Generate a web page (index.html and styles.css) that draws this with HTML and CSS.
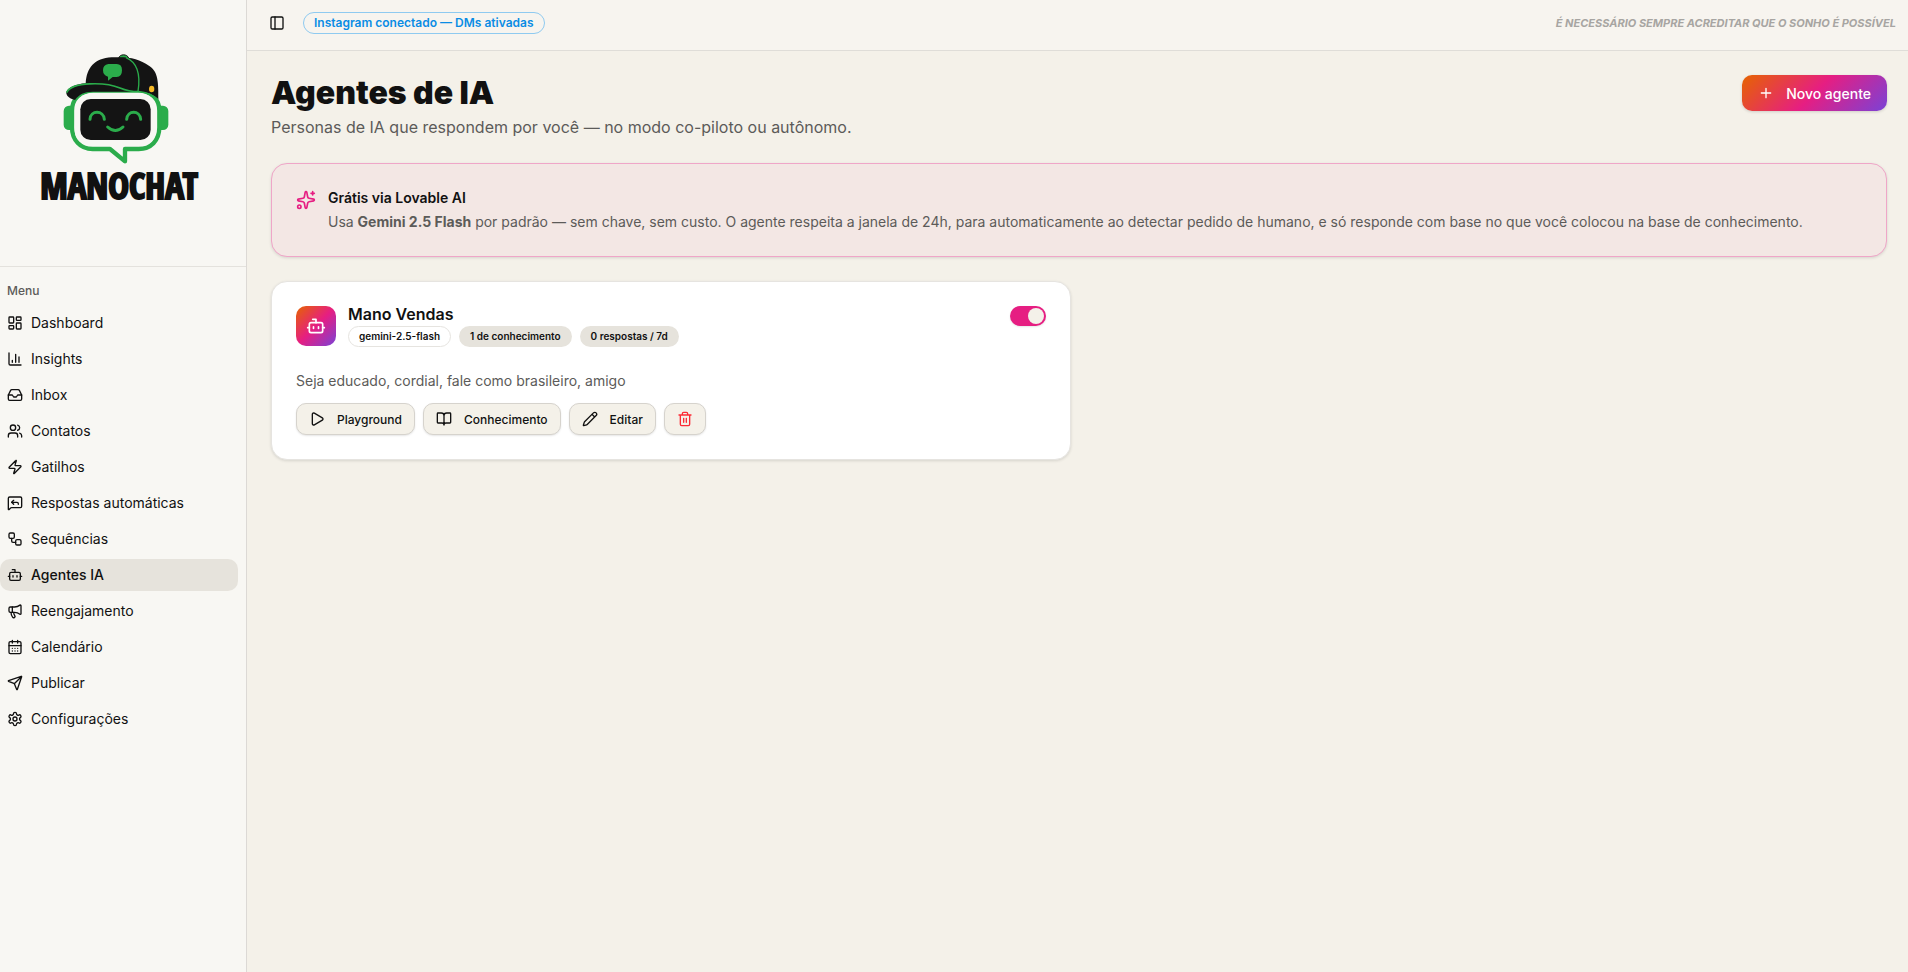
FILE: index.html
```html
<!DOCTYPE html>
<html lang="pt-BR">
<head>
    <meta charset="UTF-8">
    <meta name="viewport" content="width=device-width, initial-scale=1.0">
    <title>Agentes de IA</title>
    <link rel="stylesheet" href="styles.css">
</head>
<body>
    <div class="app">
        <aside class="sidebar">
            <a class="brand" href="#">
                <svg class="brand-logo" viewBox="129 36 336 342" aria-hidden="true">
                    <rect x="131" y="197" width="40" height="73" rx="16" fill="#2bac4b"/>
                    <rect x="406" y="197" width="39" height="73" rx="16" fill="#2bac4b"/>
                    <path d="M218 153H356C394 153 418 177 418 212V262C418 302 392 327 356 327H315V364L270 327H218C180 327 156 299 156 262V212C156 177 180 153 218 153Z" fill="#f8f7f3" stroke="#2bac4b" stroke-width="13" stroke-linejoin="round"/>
                    <path d="M296 55C298 41 323 41 326 55Z" fill="#2bac4b" stroke="#141414" stroke-width="3"/>
                    <path d="M197 130C200 83 223 55 275 52C332 50 356 56 388 78C411 94 416 115 415 178C402 163 380 154 354 155H218C192 155 177 163 165 180C145 175 138 165 139 157C144 141 170 132 197 130Z" fill="#141414"/>
                    <path d="M140 158C154 124 258 126 300 144C322 153 338 155 356 155" fill="none" stroke="#2bac4b" stroke-width="5"/>
                    <path d="M318 53C351 67 362 105 354 155M356 154Q390 157 413 178" fill="none" stroke="#2bac4b" stroke-width="4"/>
                    <path d="M265 72H290Q306 72 306 91Q306 111 290 111H278L264 122V110Q249 106 249 91Q249 74 265 72Z" fill="#2bac4b"/>
                    <ellipse cx="395" cy="147" rx="8" ry="10" fill="#f6b926"/>
                    <path d="M166 206C168 177 188 158 220 158H354C388 158 408 179 408 207V269C408 301 386 318 354 318H220C184 318 164 298 164 269Z" fill="#f8f7f3"/>
                    <rect x="181" y="177" width="211" height="123" rx="31" fill="#141414"/>
                    <path d="M210 238C211 210 251 210 253 238M320 238C322 210 360 210 362 238M263 261Q286 282 309 261" fill="none" stroke="#2bac4b" stroke-width="9" stroke-linecap="round"/>
                </svg>
                <span class="brand-name">MANOCHAT</span>
            </a>
            <nav class="menu" aria-label="Menu">
                <div class="menu-label">Menu</div>
                <a class="menu-item" href="#">
                    <svg class="icon" viewBox="0 0 24 24"><rect width="7" height="9" x="3" y="3" rx="1"/><rect width="7" height="5" x="14" y="3" rx="1"/><rect width="7" height="9" x="14" y="12" rx="1"/><rect width="7" height="5" x="3" y="16" rx="1"/></svg>
                    Dashboard
                </a>
                <a class="menu-item" href="#">
                    <svg class="icon" viewBox="0 0 24 24"><path d="M3 3v16a2 2 0 0 0 2 2h16M18 17V9M13 17V5M8 17v-3"/></svg>
                    Insights
                </a>
                <a class="menu-item" href="#">
                    <svg class="icon" viewBox="0 0 24 24"><path d="M22 12h-6l-2 3h-4l-2-3H2"/><path d="M5.45 5.11 2 12v6a2 2 0 0 0 2 2h16a2 2 0 0 0 2-2v-6l-3.45-6.89A2 2 0 0 0 16.76 4H7.24a2 2 0 0 0-1.79 1.11z"/></svg>
                    Inbox
                </a>
                <a class="menu-item" href="#">
                    <svg class="icon" viewBox="0 0 24 24"><path d="M16 21v-2a4 4 0 0 0-4-4H6a4 4 0 0 0-4 4v2"/><circle cx="9" cy="7" r="4"/><path d="M22 21v-2a4 4 0 0 0-3-3.87M16 3.13a4 4 0 0 1 0 7.75"/></svg>
                    Contatos
                </a>
                <a class="menu-item" href="#">
                    <svg class="icon" viewBox="0 0 24 24"><path d="M4 14a1 1 0 0 1-.78-1.63l9.9-10.2a.5.5 0 0 1 .86.46l-1.92 6.02A1 1 0 0 0 13 10h7a1 1 0 0 1 .78 1.63l-9.9 10.2a.5.5 0 0 1-.86-.46l1.92-6.02A1 1 0 0 0 11 14z"/></svg>
                    Gatilhos
                </a>
                <a class="menu-item" href="#">
                    <svg class="icon" viewBox="0 0 24 24"><path d="M22 17a2 2 0 0 1-2 2H6.828a2 2 0 0 0-1.414.586l-2.202 2.202A.71.71 0 0 1 2 21.286V5a2 2 0 0 1 2-2h16a2 2 0 0 1 2 2z"/><path d="m10 8-3 3 3 3"/><path d="M17 14v-1a2 2 0 0 0-2-2H7"/></svg>
                    Respostas automáticas
                </a>
                <a class="menu-item" href="#">
                    <svg class="icon" viewBox="0 0 24 24"><rect width="8" height="8" x="3" y="3" rx="2"/><path d="M7 11v4a2 2 0 0 0 2 2h4"/><rect width="8" height="8" x="13" y="13" rx="2"/></svg>
                    Sequências
                </a>
                <a class="menu-item active" href="#" aria-current="page">
                    <svg class="icon" viewBox="0 0 24 24"><path d="M12 8V4H8"/><rect width="16" height="12" x="4" y="8" rx="2"/><path d="M2 14h2M20 14h2M15 13v2M9 13v2"/></svg>
                    Agentes IA
                </a>
                <a class="menu-item" href="#">
                    <svg class="icon" viewBox="0 0 24 24"><path d="M11 6a13 13 0 0 0 8.4-2.8A1 1 0 0 1 21 4v12a1 1 0 0 1-1.6.8A13 13 0 0 0 11 14H5a2 2 0 0 1-2-2V8a2 2 0 0 1 2-2z"/><path d="M6 14a12 12 0 0 0 2.4 7.2 2 2 0 0 0 3.2-2.4A8 8 0 0 1 10 14M8 6v8"/></svg>
                    Reengajamento
                </a>
                <a class="menu-item" href="#">
                    <svg class="icon" viewBox="0 0 24 24"><path d="M8 2v4M16 2v4"/><rect width="18" height="18" x="3" y="4" rx="2"/><path d="M3 10h18M8 14h.01M12 14h.01M16 14h.01M8 18h.01M12 18h.01M16 18h.01"/></svg>
                    Calendário
                </a>
                <a class="menu-item" href="#">
                    <svg class="icon" viewBox="0 0 24 24"><path d="M14.536 21.686a.5.5 0 0 0 .937-.024l6.5-19a.496.496 0 0 0-.635-.635l-19 6.5a.5.5 0 0 0-.024.937l7.93 3.18a2 2 0 0 1 1.112 1.11zM21.854 2.147l-10.94 10.939"/></svg>
                    Publicar
                </a>
                <a class="menu-item" href="#">
                    <svg class="icon" viewBox="0 0 24 24"><path d="M12.22 2h-.44a2 2 0 0 0-2 2v.18a2 2 0 0 1-1 1.73l-.43.25a2 2 0 0 1-2 0l-.15-.08a2 2 0 0 0-2.73.73l-.22.38a2 2 0 0 0 .73 2.73l.15.1a2 2 0 0 1 1 1.72v.51a2 2 0 0 1-1 1.74l-.15.09a2 2 0 0 0-.73 2.73l.22.38a2 2 0 0 0 2.73.73l.15-.08a2 2 0 0 1 2 0l.43.25a2 2 0 0 1 1 1.73V20a2 2 0 0 0 2 2h.44a2 2 0 0 0 2-2v-.18a2 2 0 0 1 1-1.73l.43-.25a2 2 0 0 1 2 0l.15.08a2 2 0 0 0 2.73-.73l.22-.39a2 2 0 0 0-.73-2.73l-.15-.08a2 2 0 0 1-1-1.74v-.5a2 2 0 0 1 1-1.74l.15-.09a2 2 0 0 0 .73-2.73l-.22-.38a2 2 0 0 0-2.73-.73l-.15.08a2 2 0 0 1-2 0l-.43-.25a2 2 0 0 1-1-1.73V4a2 2 0 0 0-2-2z"/><circle cx="12" cy="12" r="3"/></svg>
                    Configurações
                </a>
            </nav>
        </aside>

        <div class="page">
            <header class="topbar">
                <button class="sidebar-toggle" type="button" aria-label="Alternar menu">
                    <svg class="icon" viewBox="0 0 24 24"><rect width="18" height="18" x="3" y="3" rx="2"/><path d="M9 3v18"/></svg>
                </button>
                <span class="status">Instagram conectado — DMs ativadas</span>
                <span class="motto">É NECESSÁRIO SEMPRE ACREDITAR QUE O SONHO É POSSÍVEL</span>
            </header>

            <main class="content">
                <div class="heading">
                    <div>
                        <h1>Agentes de IA</h1>
                        <p class="subtitle">Personas de IA que respondem por você — no modo co-piloto ou autônomo.</p>
                    </div>
                    <button class="btn-new" type="button">
                        <svg class="icon" viewBox="0 0 24 24"><path d="M5 12h14M12 5v14"/></svg>
                        Novo agente
                    </button>
                </div>

                <section class="card notice">
                    <svg class="icon icon-lg" viewBox="0 0 24 24"><path d="M11.017 2.814a1 1 0 0 1 1.966 0l1.051 5.558a2 2 0 0 0 1.594 1.594l5.558 1.051a1 1 0 0 1 0 1.966l-5.558 1.051a2 2 0 0 0-1.594 1.594l-1.051 5.558a1 1 0 0 1-1.966 0l-1.051-5.558a2 2 0 0 0-1.594-1.594l-5.558-1.051a1 1 0 0 1 0-1.966l5.558-1.051a2 2 0 0 0 1.594-1.594zM20 2v4M22 4h-4"/><circle cx="4" cy="20" r="2"/></svg>
                    <div>
                        <h2>Grátis via Lovable AI</h2>
                        <p>Usa <strong>Gemini 2.5 Flash</strong> por padrão — sem chave, sem custo. O agente respeita a janela de 24h, para automaticamente ao detectar pedido de humano, e só responde com base no que você colocou na base de conhecimento.</p>
                    </div>
                </section>

                <div class="agents">
                    <article class="card agent">
                        <div class="agent-head">
                            <div class="avatar">
                                <svg class="icon icon-lg" viewBox="0 0 24 24"><path d="M12 8V4H8"/><rect width="16" height="12" x="4" y="8" rx="2"/><path d="M2 14h2M20 14h2M15 13v2M9 13v2"/></svg>
                            </div>
                            <div>
                                <h3 id="agent-name">Mano Vendas</h3>
                                <div class="badges">
                                    <span class="badge outline">gemini-2.5-flash</span>
                                    <span class="badge">1 de conhecimento</span>
                                    <span class="badge">0 respostas / 7d</span>
                                </div>
                            </div>
                            <input class="switch" type="checkbox" role="switch" aria-labelledby="agent-name" checked>
                        </div>
                        <p class="agent-text">Seja educado, cordial, fale como brasileiro, amigo</p>
                        <div class="actions">
                            <button class="btn" type="button">
                                <svg class="icon" viewBox="0 0 24 24"><path d="M5 5a2 2 0 0 1 3.008-1.728l11.997 6.998a2 2 0 0 1 .003 3.458l-12 7A2 2 0 0 1 5 19z"/></svg>
                                Playground
                            </button>
                            <button class="btn" type="button">
                                <svg class="icon" viewBox="0 0 24 24"><path d="M12 7v14M3 18a1 1 0 0 1-1-1V4a1 1 0 0 1 1-1h5a4 4 0 0 1 4 4 4 4 0 0 1 4-4h5a1 1 0 0 1 1 1v13a1 1 0 0 1-1 1h-6a3 3 0 0 0-3 3 3 3 0 0 0-3-3z"/></svg>
                                Conhecimento
                            </button>
                            <button class="btn" type="button">
                                <svg class="icon" viewBox="0 0 24 24"><path d="M21.174 6.812a1 1 0 0 0-3.986-3.987L3.842 16.174a2 2 0 0 0-.5.83l-1.321 4.352a.5.5 0 0 0 .623.622l4.353-1.32a2 2 0 0 0 .83-.497zM15 5l4 4"/></svg>
                                Editar
                            </button>
                            <button class="btn danger" type="button" aria-label="Excluir">
                                <svg class="icon" viewBox="0 0 24 24"><path d="M3 6h18M19 6v14a2 2 0 0 1-2 2H7a2 2 0 0 1-2-2V6M8 6V4a2 2 0 0 1 2-2h4a2 2 0 0 1 2 2v2M10 11v6M14 11v6"/></svg>
                            </button>
                        </div>
                    </article>
                </div>
            </main>
        </div>
    </div>
</body>
</html>
```
FILE: styles.css
```css
* {
    box-sizing: border-box;
}
body {
    margin: 0;
    font-family: Inter, "Liberation Sans", sans-serif;
    font-size: 14px;
    line-height: 20px;
    color: #111;
    background: #f4f1e9;
}
h1, h2, h3, p {
    margin: 0;
}
a {
    color: inherit;
    text-decoration: none;
}
button {
    font-family: inherit;
    color: inherit;
    cursor: pointer;
}
.icon {
    width: 16px;
    height: 16px;
    flex-shrink: 0;
    fill: none;
    stroke: currentColor;
    stroke-width: 2;
    stroke-linecap: round;
    stroke-linejoin: round;
}
.icon-lg {
    width: 20px;
    height: 20px;
}
.app {
    display: flex;
    min-height: 100vh;
}

/* Sidebar */
.sidebar {
    width: 247px;
    flex-shrink: 0;
    background: #f8f7f3;
    border-right: 1px solid #dcd9d5;
}
.brand {
    display: flex;
    flex-direction: column;
    align-items: center;
    padding: 52px 8px 60px 0;
    border-bottom: 1px solid #e4e2dd;
}
.brand-logo {
    width: 112px;
    height: 114px;
}
.brand-name {
    font-family: "Open Sans Condensed", "Liberation Sans Narrow", "Roboto Condensed", Roboto, sans-serif;
    font-size: 35px;
    line-height: 40px;
    font-weight: 800;
    -webkit-text-stroke: 2px #111;
}
.menu {
    display: flex;
    flex-direction: column;
    gap: 4px;
    padding: 8px 8px 8px 0;
}
.menu-label {
    padding: 6px 7px;
    margin-bottom: -4px;
    font-size: 12px;
    font-weight: 500;
    color: #5c5b59;
}
.menu-item {
    display: flex;
    align-items: center;
    gap: 8px;
    height: 32px;
    padding: 0 7px;
    border-radius: 10px;
}
.menu-item:hover,
.menu-item.active {
    background: #e6e3dc;
}
.menu-item.active {
    font-weight: 500;
}

/* Top bar */
.page {
    flex: 1;
    min-width: 0;
}
.topbar {
    display: flex;
    align-items: center;
    padding: 9px 12px 13px 16px;
    background: #f7f4ef;
    border-bottom: 1px solid #dfddd8;
}
.sidebar-toggle {
    display: flex;
    padding: 6px;
    border: none;
    background: none;
}
.status {
    margin-left: 12px;
    padding: 2px 10px;
    border: 1px solid #8fcaf0;
    border-radius: 999px;
    font-size: 12px;
    line-height: 16px;
    font-weight: 600;
    color: #0a8ce4;
}
.motto {
    margin-left: auto;
    font-size: 11px;
    font-weight: 700;
    font-style: italic;
    color: #a7a5a2;
}

/* Content */
.content {
    display: flex;
    flex-direction: column;
    gap: 24px;
    padding: 24px 21px 24px 24px;
}
.heading {
    display: flex;
    justify-content: space-between;
    align-items: flex-start;
}
h1 {
    font-size: 32px;
    line-height: 36px;
    font-weight: 900;
}
.subtitle {
    margin-top: 4px;
    font-size: 16px;
    line-height: 24px;
    color: #5c5b59;
}
.btn-new {
    display: flex;
    align-items: center;
    gap: 12px;
    height: 36px;
    padding: 0 16px;
    border: none;
    border-radius: 10px;
    background: linear-gradient(135deg, #e66400, #e61e82 50%, #7a42d6);
    box-shadow: 0 1px 3px rgba(0, 0, 0, 0.15);
    font-size: 14px;
    font-weight: 500;
    color: #fff;
}
.card {
    padding: 24px;
    border: 1px solid #e6e4e0;
    border-radius: 16px;
    background: #fff;
    box-shadow: 0 1px 3px rgba(0, 0, 0, 0.12);
}
.notice {
    display: flex;
    gap: 12px;
    background: #f3e7e4;
    border-color: #efa6c8;
}
.notice .icon {
    margin-top: 2px;
    color: #e61e82;
}
.notice h2 {
    margin-bottom: 4px;
    font-size: 14px;
    font-weight: 600;
}
.notice p,
.agent-text {
    color: #5c5b59;
}
.agents {
    display: grid;
    grid-template-columns: 1fr 1fr;
    gap: 16px;
}
.agent-head {
    display: flex;
    align-items: flex-start;
    gap: 12px;
}
.avatar {
    display: flex;
    align-items: center;
    justify-content: center;
    width: 40px;
    height: 40px;
    border-radius: 10px;
    background: linear-gradient(135deg, #e66400, #e61e82 50%, #7a42d6);
    color: #fff;
}
.agent h3 {
    font-size: 16px;
    line-height: 16px;
    font-weight: 600;
}
.badges {
    display: flex;
    gap: 8px;
    margin-top: 4px;
}
.badge {
    padding: 2px 10px;
    border: 1px solid transparent;
    border-radius: 999px;
    background: #e6e3dc;
    font-size: 10px;
    line-height: 15px;
    font-weight: 600;
}
.badge.outline {
    background: #fff;
    border-color: #e6e4e0;
}
.switch {
    appearance: none;
    width: 36px;
    height: 20px;
    margin: 0 0 0 auto;
    padding: 2px;
    border-radius: 999px;
    background: #c9c6bf;
    box-shadow: 0 1px 2px rgba(0, 0, 0, 0.1);
    cursor: pointer;
}
.switch::before {
    content: "";
    display: block;
    width: 16px;
    height: 16px;
    border-radius: 50%;
    background: #f4f1e9;
}
.switch:checked {
    background: #e61e82;
}
.switch:checked::before {
    margin-left: auto;
}
.agent-text {
    margin: 24px 0 12px;
}
.actions {
    display: flex;
    gap: 8px;
}
.btn {
    display: flex;
    align-items: center;
    gap: 12px;
    height: 32px;
    padding: 0 12px;
    border: 1px solid #d6d3cd;
    border-radius: 10px;
    background: #f4f1e9;
    box-shadow: 0 1px 2px rgba(0, 0, 0, 0.1);
    font-size: 12px;
    font-weight: 500;
}
.btn.danger {
    color: #fb2c36;
}
```
